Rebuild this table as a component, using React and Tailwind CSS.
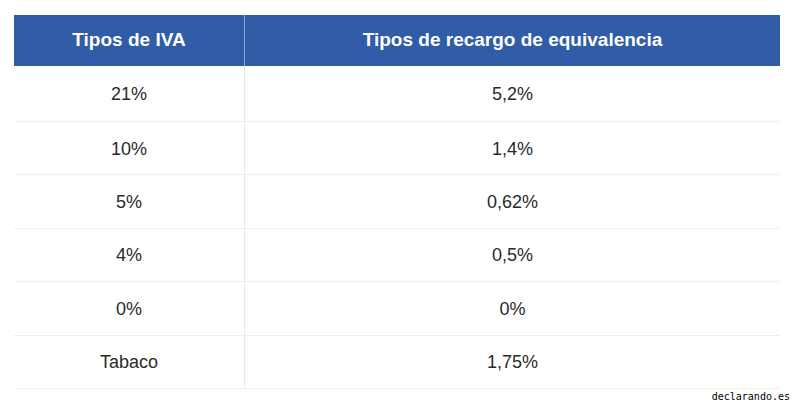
export default function App() {
  const rows = [
    ["21%", "5,2%"],
    ["10%", "1,4%"],
    ["5%", "0,62%"],
    ["4%", "0,5%"],
    ["0%", "0%"],
    ["Tabaco", "1,75%"],
  ];
  return (
    <div className="relative w-[800px] h-[412px] bg-white pt-[15px] pl-[14px]" style={{ fontFamily: '"Liberation Sans", Arial, sans-serif' }}>
      <div className="w-[766px]">
        <div className="flex h-[51px] bg-[#305ca8] text-white font-bold text-[19px]">
          <div className="w-[231px] flex items-center justify-center border-r border-[#8aa3cf]">Tipos de IVA</div>
          <div className="flex-1 flex items-center justify-center">Tipos de recargo de equivalencia</div>
        </div>
        {rows.map((r, i) => (
          <div
            key={i}
            className={`flex text-[18px] text-[#2a2a2a] ${i === 0 ? "h-[56px]" : "h-[53.4px]"} ${i === rows.length - 1 ? "border-b border-[#f8f0dc]" : "border-b border-[#eeeeee]"}`}
          >
            <div className="w-[231px] flex items-center justify-center pt-[2px] border-r border-[#e8e8e8]">{r[0]}</div>
            <div className="flex-1 flex items-center justify-center pt-[2px]">{r[1]}</div>
          </div>
        ))}
      </div>
      <div
        className="absolute right-[10px] top-[389px] text-[10px] text-black"
        style={{ fontFamily: '"DejaVu Sans Mono", monospace', textShadow: "1px 1px 0 #fff" }}
      >
        declarando.es
      </div>
    </div>
  );
}
